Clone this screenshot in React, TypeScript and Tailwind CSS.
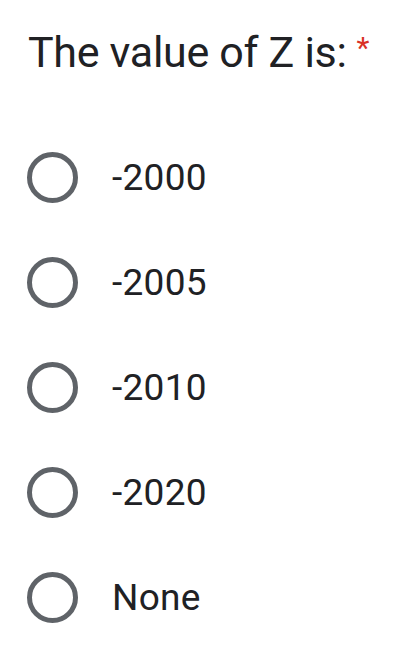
const options = ['-2000', '-2005', '-2010', '-2020', 'None'];

export default function App() {
  return (
    <div className="w-[412px] h-[665px] bg-white overflow-hidden" style={{ fontFamily: 'Roboto, "Liberation Sans", sans-serif' }}>
      <div className="pl-[28px] pt-[26px]">
        <div className="flex items-start text-[43px] leading-[52px] text-[#202124] tracking-[-0.3px]">
          <span>The value of Z is:</span>
          <span className="ml-[10px] mt-[4px] text-[#d93025] text-[30px] leading-[36px]">*</span>
        </div>
      </div>
      <div className="mt-[47px] pl-[27px]">
        {options.map((o) => (
          <div key={o} className="flex items-center h-[105px]">
            <div className="w-[51px] h-[51px] rounded-full border-[5px] border-[#5f6368] shrink-0" />
            <span className="ml-[34px] text-[37px] text-[#202124] tracking-[0.3px]">{o}</span>
          </div>
        ))}
      </div>
    </div>
  );
}
